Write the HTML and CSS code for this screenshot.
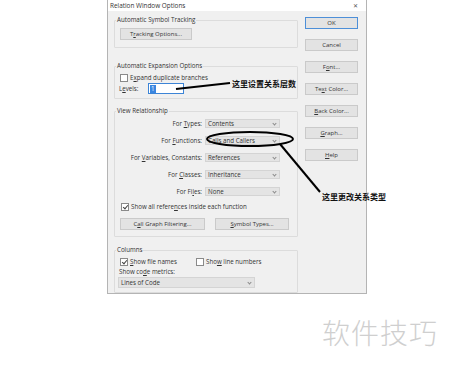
FILE: index.html
```html
<!DOCTYPE html>
<html lang="en">
<head>
    <meta charset="UTF-8">
    <title>Relation Window Options</title>
    <link rel="stylesheet" href="styles.css">
</head>
<body>
    <div class="dialog">
        <div class="titlebar">
            <span>Relation Window Options</span>
            <span class="close">&#x2715;</span>
        </div>
        <div class="content">
            <div class="main">
                <fieldset class="group g-track">
                    <legend>Automatic Symbol Tracking</legend>
                    <button class="btn btn-track"><span>T<u>r</u>acking Options...</span></button>
                </fieldset>

                <fieldset class="group g-expand">
                    <legend>Automatic Expansion Options</legend>
                    <label class="check"><span class="box"></span><span>E<u>x</u>pand duplicate branches</span></label>
                    <div class="levels">
                        <span class="levels-label">L<u>e</u>vels:</span>
                        <span class="level-input"><span class="sel">1</span></span>
                    </div>
                </fieldset>

                <fieldset class="group g-view">
                    <legend>View Relationship</legend>
                    <div class="rel-grid">
                        <span class="rel-label">For <u>T</u>ypes:</span>
                        <span class="select"><span>Contents</span></span>
                        <span class="rel-label">For <u>F</u>unctions:</span>
                        <span class="select"><span>Calls and Callers</span></span>
                        <span class="rel-label">For <u>V</u>ariables, Constants:</span>
                        <span class="select"><span>References</span></span>
                        <span class="rel-label">For <u>C</u>lasses:</span>
                        <span class="select"><span>Inheritance</span></span>
                        <span class="rel-label">For Fi<u>l</u>es:</span>
                        <span class="select"><span>None</span></span>
                    </div>
                    <label class="check check-refs"><span class="box checked"></span><span>Show all refere<u>n</u>ces inside each function</span></label>
                    <div class="btn-row">
                        <button class="btn btn-call"><span>C<u>a</u>ll Graph Filtering...</span></button>
                        <button class="btn btn-sym"><span><u>S</u>ymbol Types...</span></button>
                    </div>
                </fieldset>

                <fieldset class="group g-cols">
                    <legend>Columns</legend>
                    <div class="col-checks">
                        <label class="check"><span class="box checked"></span><span><u>S</u>how file names</span></label>
                        <label class="check"><span class="box"></span><span>Sho<u>w</u> line numbers</span></label>
                    </div>
                    <div class="metrics-label">Show co<u>d</u>e metrics:</div>
                    <span class="select select-wide"><span>Lines of Code</span></span>
                </fieldset>
            </div>

            <div class="side">
                <button class="btn side-btn default"><span>OK</span></button>
                <button class="btn side-btn"><span>Cancel</span></button>
                <button class="btn side-btn"><span>F<u>o</u>nt...</span></button>
                <button class="btn side-btn"><span>Te<u>x</u>t Color...</span></button>
                <button class="btn side-btn"><span><u>B</u>ack Color...</span></button>
                <button class="btn side-btn"><span><u>G</u>raph...</span></button>
                <button class="btn side-btn"><span><u>H</u>elp</span></button>
            </div>
        </div>
    </div>

    <!-- annotations drawn over the screenshot -->
    <svg class="marks" width="450" height="369" viewBox="0 0 450 369">
        <line x1="176" y1="89" x2="230" y2="83" stroke="#000" stroke-width="2"/>
        <ellipse cx="250" cy="139" rx="43" ry="7" fill="none" stroke="#000" stroke-width="2"/>
        <line x1="280" y1="144" x2="320" y2="192" stroke="#000" stroke-width="2"/>
    </svg>
    <div class="note note-levels">这里设置关系层数</div>
    <div class="note note-type">这里更改关系类型</div>
    <div class="watermark">软件技巧</div>
</body>
</html>
```

FILE: styles.css
```css
body {
    margin: 0;
    background: #fff;
    font-family: "Open Sans", "Noto Sans", sans-serif;
    font-size: 6.2px;
    color: #333;
    width: 450px;
    height: 369px;
    overflow: hidden;
    position: relative;
}
u {
    text-decoration-thickness: 0.5px;
    text-underline-offset: 0.5px;
}
.dialog {
    margin-left: 107px;
    width: 260px;
    height: 294px;
    box-sizing: border-box;
    border: 1px solid #b4b4b4;
    border-top: none;
    background: #f0f0f0;
}
.titlebar {
    height: 11px;
    background: #fff;
    display: flex;
    justify-content: space-between;
    align-items: center;
    padding: 0 8px 0 2px;
    font-size: 6.4px;
}
.close {
    font-size: 6px;
    color: #555;
}
.content {
    display: flex;
    padding-left: 6px;
}
.main {
    width: 184px;
    padding-top: 5px;
}
.side {
    display: flex;
    flex-direction: column;
    gap: 10px;
    margin-left: 7px;
    padding-top: 6px;
}
.group {
    box-sizing: border-box;
    margin: 0;
    padding: 0 0 0 5px;
    border: 1px solid #dcdcdc;
    border-radius: 1px;
}
.group legend {
    padding: 0 1px;
    margin-left: -4px;
    line-height: 8px;
}
.g-track {
    height: 32px;
}
.g-expand {
    height: 37px;
    margin-top: 14px;
}
.g-view {
    height: 130px;
    margin-top: 8px;
}
.g-cols {
    height: 47px;
    margin-top: 9px;
}
.btn {
    font-family: inherit;
    font-size: 6px;
    color: #333;
    background: #e3e3e3;
    border: 1px solid #cacaca;
    padding: 0;
    height: 12px;
    box-sizing: border-box;
    display: flex;
    align-items: center;
    justify-content: center;
    line-height: 8px;
}
.btn-track {
    width: 72px;
    margin-top: 4px;
}
.check {
    display: flex;
    align-items: center;
    gap: 2px;
}
.box {
    width: 6px;
    height: 6px;
    border: 1px solid #8a8a8a;
    background: #fff;
    position: relative;
    flex: none;
}
.box.checked::after {
    content: "";
    position: absolute;
    left: 1.5px;
    top: 0;
    width: 2px;
    height: 4px;
    border: solid #444;
    border-width: 0 0.8px 0.8px 0;
    transform: rotate(40deg);
}
.g-expand .check {
    margin-top: 3px;
}
.levels {
    display: flex;
    align-items: center;
    margin-top: 1px;
}
.levels-label {
    width: 29px;
    margin-left: -1px;
}
.level-input {
    width: 36px;
    height: 11px;
    box-sizing: border-box;
    border: 1px solid #3c84d6;
    background: #fff;
    display: flex;
    align-items: center;
    padding-left: 1px;
}
.sel {
    background: #3a86e0;
    color: #fff;
    padding: 0 1px;
    line-height: 8px;
}
.rel-grid {
    display: grid;
    grid-template-columns: 87px 75px;
    column-gap: 3px;
    row-gap: 8px;
    align-items: center;
    margin: 4px 0 0 -5px;
}
.rel-label {
    text-align: right;
}
.select {
    display: flex;
    align-items: center;
    justify-content: space-between;
    height: 9px;
    box-sizing: border-box;
    background: #e4e4e4;
    border: 1px solid #d4d4d4;
    padding: 0 3px 0 2px;
}
.select::after {
    content: "";
    width: 2px;
    height: 2px;
    border: solid #8a8a8a;
    border-width: 0 0.7px 0.7px 0;
    transform: rotate(45deg);
    margin-bottom: 1px;
}
.check-refs {
    margin: 6px 0 0 1px;
}
.btn-row {
    display: flex;
    gap: 10px;
    margin-top: 7px;
}
.btn-call {
    width: 85px;
}
.btn-sym {
    width: 74px;
}
.col-checks {
    display: flex;
    gap: 19px;
    margin-top: 3px;
}
.metrics-label {
    margin: 1px 0 0 -1px;
}
.select-wide {
    width: 137px;
    margin: 1px 0 0 -2px;
    height: 11px;
}
.side-btn {
    width: 53px;
}
.side-btn.default {
    border-color: #4d8fd8;
}
.marks {
    position: absolute;
    left: 0;
    top: 0;
}
.note {
    position: absolute;
    font-family: "Noto Sans CJK SC", sans-serif;
    font-weight: bold;
    font-size: 8px;
    color: #111;
    line-height: 10px;
}
.note-levels {
    left: 232px;
    top: 79px;
}
.note-type {
    left: 322px;
    top: 192px;
}
.watermark {
    position: absolute;
    left: 322px;
    top: 312px;
    font-family: "Noto Sans CJK SC", sans-serif;
    font-weight: 300;
    font-size: 28px;
    color: #cfcfcf;
    letter-spacing: 1px;
}
```
